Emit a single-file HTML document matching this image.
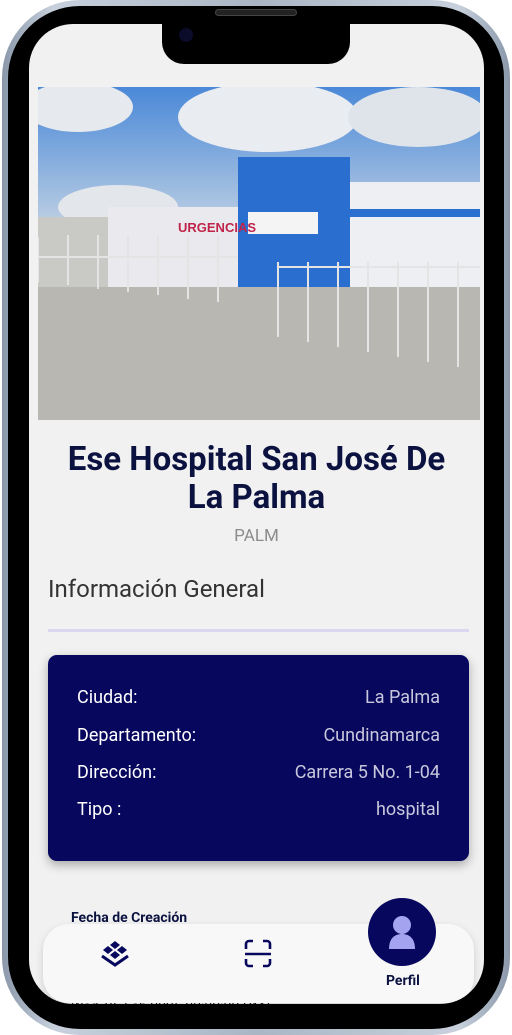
<!DOCTYPE html>
<html><head><meta charset="utf-8"><style>
*{margin:0;padding:0;box-sizing:border-box}
body{width:512px;height:1035px;background:#fff;font-family:"Roboto","Liberation Sans",sans-serif;position:relative;overflow:hidden}
.frame{position:absolute;left:2px;top:0;width:508px;height:1035px;border-radius:78px;background:linear-gradient(90deg,#8a98aa,#c7d0dc 10%,#aab6c4 50%,#c7d0dc 90%,#8a98aa)}
.bezel{position:absolute;left:8px;top:6px;width:496px;height:1023px;border-radius:72px;background:#000}
.screen{position:absolute;left:29px;top:24px;width:455px;height:980px;border-radius:44px;background:#f1f1f1;overflow:hidden}
.notch{position:absolute;left:162px;top:22px;width:188px;height:42px;background:#000;border-radius:0 0 22px 22px}
.cam{position:absolute;left:179px;top:28px;width:14px;height:14px;border-radius:50%;background:#0b0b2a}
.spk{position:absolute;left:215px;top:9px;width:82px;height:7px;border-radius:4px;background:#222;border:1px solid #444}
.photo{position:absolute;left:9px;top:63px;width:442px;height:333px;overflow:hidden;background:linear-gradient(#4a88d8 0%,#9cbbe0 30%,#d8dde6 50%,#c3c5c4 62%,#b7b6b1 100%)}
h1{position:absolute;left:0;width:455px;top:417px;text-align:center;font-size:33px;line-height:38px;color:#0c1240;font-weight:700}
.code{position:absolute;top:502px;width:455px;text-align:center;color:#8b8b8b;font-size:17px}
.ig{position:absolute;left:19px;top:551px;font-size:24px;color:#333}
.hr{position:absolute;left:19px;top:605px;width:421px;height:3px;background:#d9d8ee}
.card{position:absolute;left:19px;top:631px;width:421px;height:206px;background:#07075e;border-radius:9px;box-shadow:0 4px 10px rgba(0,0,0,.3);color:#fff;font-size:18px}
.row{position:absolute;left:29px;right:29px;display:flex;justify-content:space-between}
.row span:last-child{color:#c8c8dc}
.fc{position:absolute;left:42px;top:886px;font-size:14px;font-weight:700;color:#0c1240}
.wd{position:absolute;left:42px;top:975px;font-size:14px;color:#222}
.nav{position:absolute;left:14px;top:900px;width:431px;height:79px;border-radius:26px;background:#f8f8f8;box-shadow:0 3px 8px rgba(0,0,0,.15)}
.circ{position:absolute;left:339px;top:874px;width:68px;height:68px;border-radius:50%;background:#07075e}
.perfil{position:absolute;left:357px;top:949px;font-size:14px;font-weight:700;color:#0c1240}
</style></head><body>
<div class="frame"></div><div class="bezel"></div>
<div class="screen">
<div class="photo">
<svg width="442" height="333" viewBox="0 0 442 333">
<ellipse cx="40" cy="20" rx="55" ry="25" fill="#e6e9ee"/>
<ellipse cx="230" cy="30" rx="90" ry="35" fill="#e9ecf0"/>
<ellipse cx="380" cy="30" rx="70" ry="30" fill="#dfe4ea"/>
<ellipse cx="80" cy="120" rx="60" ry="22" fill="#e3e6ea"/>
<rect x="0" y="130" width="442" height="100" fill="#c9c9c6"/>
<rect x="70" y="120" width="130" height="110" fill="#e9e9ee"/>
<rect x="200" y="70" width="112" height="170" fill="#2a6fd0"/>
<rect x="312" y="95" width="130" height="160" fill="#eeeff3"/>
<rect x="312" y="122" width="130" height="8" fill="#2a6fd0"/>
<rect x="210" y="125" width="70" height="22" fill="#f4f4f4"/>
<text x="140" y="145" font-size="13" font-weight="700" fill="#c0244a" font-family="Liberation Sans">URGENCIAS</text>
<rect x="0" y="200" width="442" height="133" fill="#b8b7b2"/>
<g stroke="#e4e4e4" stroke-width="2"><path d="M0 150 V195 M30 148V198 M60 148V202 M90 148V205 M120 148V208 M150 148V212 M180 148V215 M240 175V250 M270 175V255 M300 175V260 M330 175V265 M360 175V270 M390 175V275 M420 175V280 M0 170 H200 M240 180 H442"/></g>
</svg></div>
<h1>Ese Hospital San José De<br>La Palma</h1>
<div class="code">PALM</div>
<div class="ig">Información General</div>
<div class="hr"></div>
<div class="card">
<div class="row" style="top:32px"><span>Ciudad:</span><span>La Palma</span></div>
<div class="row" style="top:70px"><span>Departamento:</span><span>Cundinamarca</span></div>
<div class="row" style="top:107px"><span>Dirección:</span><span>Carrera 5 No. 1-04</span></div>
<div class="row" style="top:144px"><span>Tipo :</span><span>hospital</span></div>
</div>
<div class="fc">Fecha de Creación</div>
<div class="wd">Wed, 26 Feb 2025 00:00:00 GMT</div>
<div class="nav">
<svg style="position:absolute;left:57px;top:16px" width="30" height="30" viewBox="0 0 30 30" fill="#07075e"><path d="M15 1l5 4-5 4-5-4z M8 6l5 4-5 4-5-4z M22 6l5 4-5 4-5-4z M15 11l5 4-5 4-5-4z"/><path d="M2 16l13 9 13-9" stroke="#07075e" stroke-width="3" fill="none"/></svg>
<svg style="position:absolute;left:200px;top:15px" width="30" height="30" viewBox="0 0 30 30" fill="none" stroke="#07075e" stroke-width="2.6"><path d="M3 10V5a3 3 0 0 1 3-3h4M20 2h4a3 3 0 0 1 3 3v5M27 20v4a3 3 0 0 1-3 3h-4M10 27H6a3 3 0 0 1-3-3v-4M2 15h26"/></svg>
</div>
<div class="circ"><svg width="68" height="68" viewBox="0 0 68 68" fill="#a3a3ef"><circle cx="34" cy="27" r="9"/><path d="M21 51c0-11 6-15 13-15s13 4 13 15z"/></svg></div>
<div class="perfil">Perfil</div>
</div>
<div class="notch"></div><div class="cam"></div><div class="spk"></div>
</body></html>
